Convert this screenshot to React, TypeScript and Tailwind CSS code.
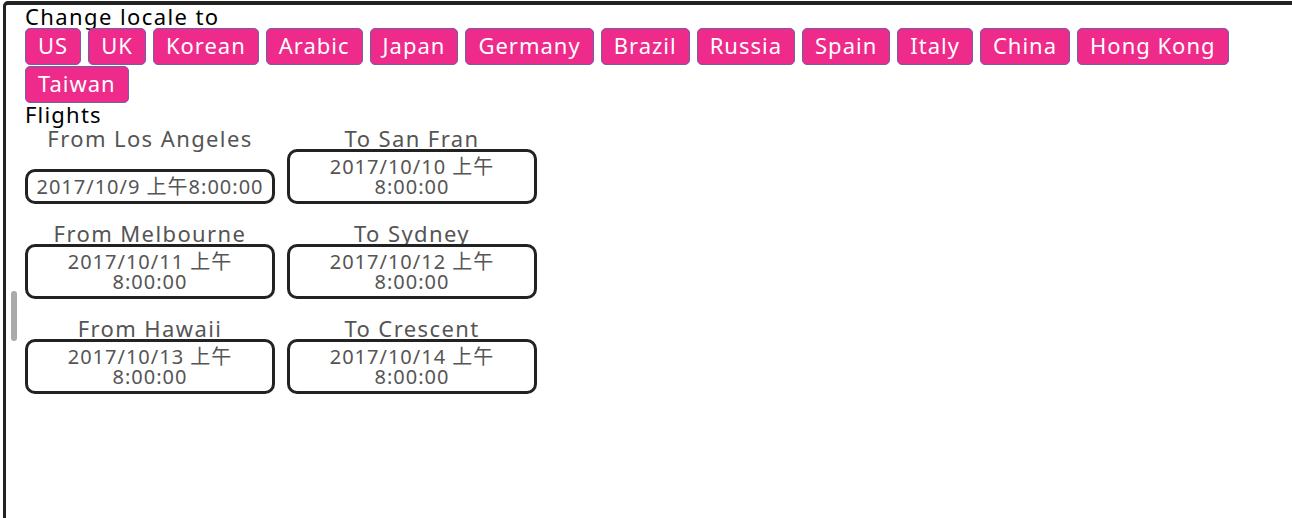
const locales = ['US', 'UK', 'Korean', 'Arabic', 'Japan', 'Germany', 'Brazil', 'Russia', 'Spain', 'Italy', 'China', 'Hong Kong', 'Taiwan']

const flights = [
    { title: 'From Los Angeles', lines: ['2017/10/9 上午8:00:00'] },
    { title: 'To San Fran', lines: ['2017/10/10 上午', '8:00:00'] },
    { title: 'From Melbourne', lines: ['2017/10/11 上午', '8:00:00'] },
    { title: 'To Sydney', lines: ['2017/10/12 上午', '8:00:00'] },
    { title: 'From Hawaii', lines: ['2017/10/13 上午', '8:00:00'] },
    { title: 'To Crescent', lines: ['2017/10/14 上午', '8:00:00'] },
]

export default function App() {
    return (
        <div
            className="w-[1292px] h-[518px] overflow-hidden bg-white"
            style={{ fontFamily: '"Noto Sans", "Noto Sans CJK SC", sans-serif' }}
        >
            <div className="relative ml-[3px] mt-[1px] w-[1340px] h-[560px] border-[4px] border-l-[3px] border-[#222] rounded-tl-[5px] pl-[19px]">
                {/* scrollbar thumb */}
                <div className="absolute left-[5px] top-[286px] w-[6px] h-[50px] rounded-full bg-[#aaaaaa]" />

                <div className="text-[22px] leading-[23px] text-black tracking-[1.4px]">Change locale to</div>

                <div className="flex flex-wrap gap-x-[7px] gap-y-[1px] w-[1290px]">
                    {locales.map(locale => (
                        <button
                            key={locale}
                            className="h-[37px] px-[12px] pb-[3px] bg-[#ee2a8b] border border-[#7060a8] rounded-[5px] text-white text-[22px] leading-none tracking-[1px]"
                        >{locale}</button>
                    ))}
                </div>

                <div className="text-[22px] leading-[23px] text-black tracking-[1.2px]">Flights</div>

                <div className="grid grid-cols-[250px_250px] gap-x-[12px] gap-y-[18px] mt-[1px]">
                    {flights.map(flight => (
                        <div key={flight.title} className="h-[77px] flex flex-col justify-between">
                            <div className="text-center text-[22px] leading-[22px] text-[#555] tracking-[1.4px]">{flight.title}</div>
                            <div className="border-[3px] border-[#222] rounded-[10px] pt-[5px] pb-[4px] text-center text-[20px] leading-[20px] text-[#555] tracking-[1px]">
                                {flight.lines.map(line => (
                                    <div key={line}>{line}</div>
                                ))}
                            </div>
                        </div>
                    ))}
                </div>
            </div>
        </div>
    )
}
